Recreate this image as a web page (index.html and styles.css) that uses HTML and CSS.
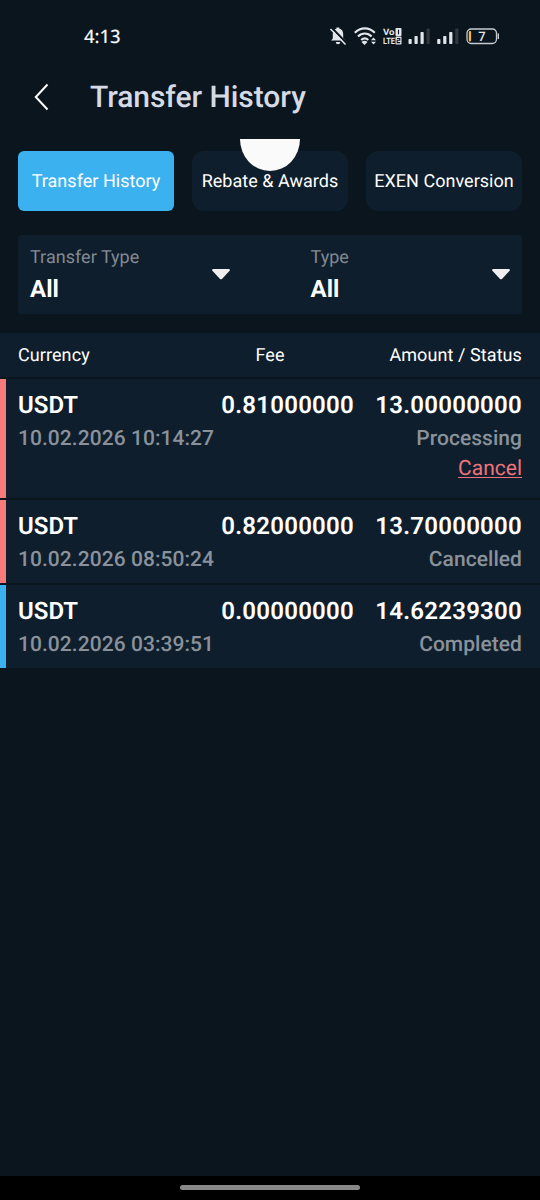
FILE: index.html
```html
<!DOCTYPE html>
<html lang="en">
<head>
<meta charset="utf-8">
<title>Transfer History</title>
<link rel="stylesheet" href="styles.css">
</head>
<body>
<div class="screen">
  <div class="statusbar">
    <span class="clock">4:13</span>
    <svg class="status-icons" width="174" height="24" viewBox="328 24 174 24">
      <g fill="#e2e5e9">
        <path d="M331 40.500l1.800-2v-4.500c0-3 1.500-4.800 3.700-5.400v-1h2.800v1c2.300.6 3.900 2.400 3.900 5.400v4.500l2 2z"/>
        <path d="M335.800 42h4.400a2.200 2.300 0 0 1-4.400 0z"/>
      </g>
      <path d="M331 27l15 15.500" stroke="#0a151e" stroke-width="2"/>
      <path d="M330.500 29l15 15.500" stroke="#e2e5e9" stroke-width="1.600"/>
      <g fill="none" stroke="#e2e5e9" stroke-width="2.200">
        <path d="M354.800 32.800c5.800-6 14.200-6 20 0"/>
        <path d="M358 36.500c4-4 9.600-4 13.600 0"/>
        <path d="M361.200 40c2.200-2.100 5-2.100 7 0"/>
      </g>
      <path d="M361.500 42a4.500 4.500 0 0 1 6 0l-3 3zM371 40.300l2.500-2.700 2.500 2.700zM371 41.800h5l-2.500 2.700z" fill="#e2e5e9"/>
      <g class="volte" fill="#e2e5e9">
        <text x="383" y="35.300" textLength="11.500" lengthAdjust="spacingAndGlyphs">Vo</text>
        <text x="383" y="44.300" textLength="12" lengthAdjust="spacingAndGlyphs">LTE</text>
        <rect x="395.500" y="28" width="6" height="8" rx=".8"/>
        <rect x="395.500" y="36.600" width="6" height="8" rx=".8"/>
      </g>
      <path d="M398.500 29.800v4.400M397 38.500h2.800v1.800h-2.600v2.300h3" fill="none" stroke="#0a151e" stroke-width="1.100"/>
      <g fill="#e2e5e9">
        <rect x="408.500" y="39" width="3.200" height="5" rx=".8"/>
        <rect x="414.500" y="36" width="3.200" height="8" rx=".8"/>
        <rect x="420.500" y="32" width="3.200" height="12" rx=".8"/>
        <rect x="437.200" y="39" width="3.200" height="5" rx=".8"/>
        <rect x="443.200" y="36" width="3.200" height="8" rx=".8"/>
        <rect x="449.200" y="32" width="3.200" height="12" rx=".8"/>
      </g>
      <rect x="426.500" y="28.500" width="3.200" height="15.500" rx=".8" fill="#30373f"/>
      <rect x="455.200" y="28.500" width="3.200" height="15.500" rx=".8" fill="#30373f"/>
      <rect x="467" y="29" width="29.500" height="14.500" rx="4.200" fill="none" stroke="#c8ccd0" stroke-width="1.300"/>
      <rect x="468.800" y="31" width="2.300" height="10.500" rx="1" fill="#f5b53c"/>
      <path d="M498.300 34v4.500" stroke="#c8ccd0" stroke-width="1.400" stroke-linecap="round"/>
      <text class="battery" x="478.200" y="40.700">7</text>
    </svg>
  </div>

  <header class="appbar">
    <svg class="back" width="16" height="30" viewBox="0 0 16 30"><path d="M13.500 2.500L1.800 15l11.700 12.500" fill="none" stroke="#fff" stroke-width="2"/></svg>
    <h1 class="title">Transfer History</h1>
  </header>

  <nav class="tabs">
    <div class="tab tab-active">Transfer History</div>
    <div class="tab">Rebate &amp; Awards</div>
    <div class="tab">EXEN Conversion</div>
    <div class="refresh"></div>
  </nav>

  <section class="filters">
    <div class="filter">
      <div><div class="filter-label">Transfer Type</div><div class="filter-value">All</div></div>
      <svg class="caret" width="18" height="11" viewBox="0 0 18 11"><path d="M1 0h16q1.500.5.600 1.700l-7.400 8.100q-1.200 1-2.400 0L.4 1.700Q-.5.500 1 0z" fill="#f0eeee"/></svg>
    </div>
    <div class="filter">
      <div><div class="filter-label">Type</div><div class="filter-value">All</div></div>
      <svg class="caret" width="18" height="11" viewBox="0 0 18 11"><path d="M1 0h16q1.500.5.600 1.700l-7.400 8.100q-1.200 1-2.400 0L.4 1.700Q-.5.500 1 0z" fill="#f0eeee"/></svg>
    </div>
  </section>

  <div class="list-head"><span>Currency</span><span class="center">Fee</span><span class="right">Amount / Status</span></div>
  <main class="list">
    <article class="row row-tall red">
      <div class="line"><span class="coin">USDT</span><span class="fee">0.81000000</span><span class="amount">13.00000000</span></div>
      <div class="meta"><span>10.02.2026 10:14:27</span><span class="state">Processing</span></div>
      <a class="cancel">Cancel</a>
    </article>
    <article class="row red">
      <div class="line"><span class="coin">USDT</span><span class="fee">0.82000000</span><span class="amount">13.70000000</span></div>
      <div class="meta"><span>10.02.2026 08:50:24</span><span class="state">Cancelled</span></div>
    </article>
    <article class="row blue">
      <div class="line"><span class="coin">USDT</span><span class="fee">0.00000000</span><span class="amount">14.62239300</span></div>
      <div class="meta"><span>10.02.2026 03:39:51</span><span class="state">Completed</span></div>
    </article>
  </main>
  <footer class="gesture"><div class="pill"></div></footer>
</div>
</body>
</html>
```
FILE: styles.css
```css
* { box-sizing: border-box; }
body { margin: 0; background: #0a151e; font-family: Roboto, sans-serif; color: #fff; text-rendering: geometricPrecision; }
.screen { width: 540px; height: 1200px; display: flex; flex-direction: column; background: #0a151e; }
.statusbar { height: 72px; padding: 24px 38px 24px 84px; display: flex; justify-content: space-between; }
.clock { font: 500 18.500px/26px "Noto Sans", sans-serif; letter-spacing: -.1px; color: #f3f5f7; }
.status-icons { display: block; }
.volte { font: 700 8.800px Roboto, sans-serif; }
.battery { font: 500 13px Roboto, sans-serif; fill: #e2e5e9; }
.appbar { height: 50px; padding-left: 34px; display: flex; align-items: center; }
.back { display: block; width: 16px; margin-right: 40px; }
.title { margin: 0; padding-top: 2px; font-size: 30px; line-height: 36px; font-weight: 500; letter-spacing: -.05px; color: #d5dae5; }
.tabs { margin: 29px 18px 0; display: grid; grid-template-columns: repeat(3, 156px); gap: 18px; position: relative; }
.tab { height: 60px; padding-top: 1px; border-radius: 12px; background: #0f1e2c; display: flex; align-items: center; justify-content: center; font-size: 18px; letter-spacing: .03px; white-space: nowrap; }
.tab-active { border-radius: 6px; background: #3cb1ef; }
.refresh { position: absolute; left: 222px; top: -12px; width: 60px; height: 32px; background: #fafafa; border-radius: 0 0 30px 30px / 0 0 32px 32px; }
.filters { margin: 24px 18px 0; height: 79px; border-radius: 3px; background: #0f1e2c; padding: 8px 12px; display: grid; grid-template-columns: 200px 199.500px; justify-content: space-between; }
.filter { display: flex; justify-content: space-between; }
.filter-label { font-size: 18px; line-height: 30px; color: #828a93; letter-spacing: .03px; }
.filter-value { font-size: 24px; line-height: 32px; font-weight: 700; }
.caret { margin-top: 26px; }
.list-head { margin-top: 19px; height: 44px; padding: 1px 18px 0; background: #0f1e2c; display: grid; grid-template-columns: repeat(3, 1fr); align-items: center; font-size: 18px; letter-spacing: .08px; }
.center { text-align: center; }
.right { text-align: right; }
.list { margin-top: 2px; display: flex; flex-direction: column; gap: 2px; }
.row { height: 83px; padding: 12px 18px 0 12px; border-left: 6px solid; background: #0f1e2c; }
.row-tall { height: 119px; }
.red { border-color: #f87b7b; }
.blue { border-color: #3cb1ef; }
.line { display: grid; grid-template-columns: 1fr 134px 168px; font-size: 24px; line-height: 28px; font-weight: 600; }
.fee, .amount { text-align: right; letter-spacing: .25px; }
.meta { margin-top: 6px; display: flex; justify-content: space-between; font-size: 21px; line-height: 28px; font-weight: 500; letter-spacing: .05px; color: #89929b; }
.cancel { display: block; margin-top: 2px; text-align: right; font-size: 21px; line-height: 28px; color: #ed747b; text-decoration: underline; text-underline-offset: 2px; text-decoration-thickness: 1px; }
.gesture { margin-top: auto; height: 24px; background: #000; display: flex; justify-content: center; padding-top: 9px; }
.pill { width: 180px; height: 5px; border-radius: 3px; background: #898989; }
```
